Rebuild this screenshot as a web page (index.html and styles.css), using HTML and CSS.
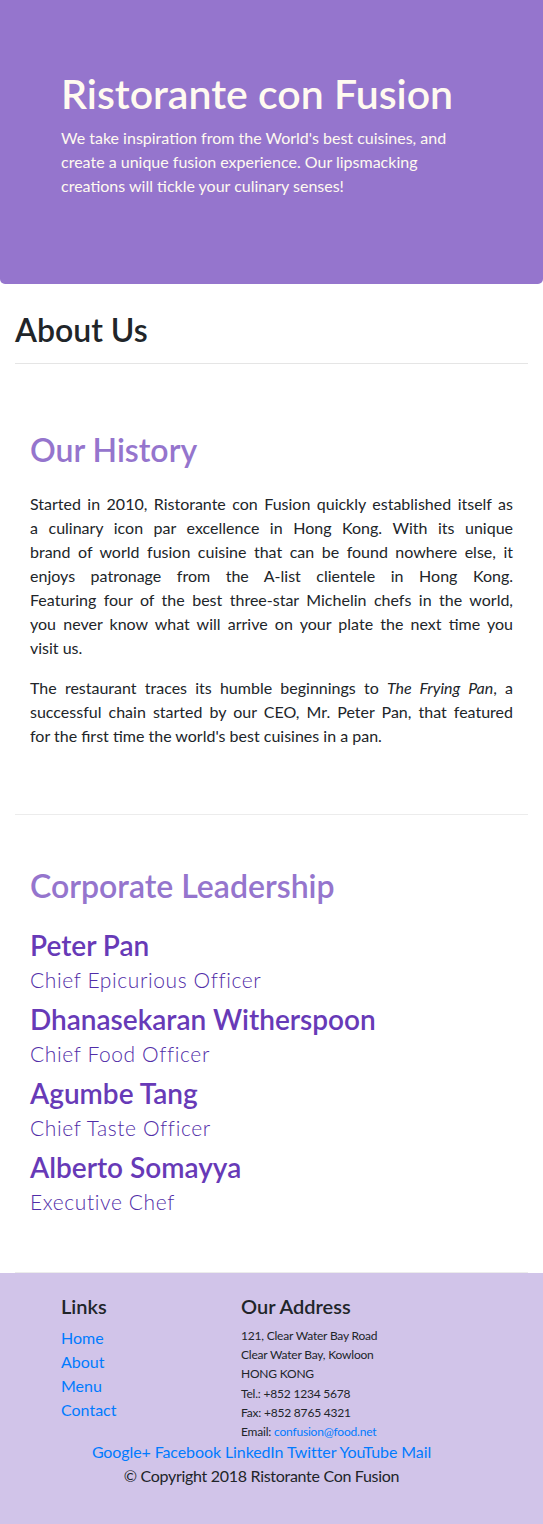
FILE: index.html
```html
<!DOCTYPE html>
<html lang="en">
<head>
<meta charset="utf-8">
<title>Ristorante con Fusion - About Us</title>
<link rel="stylesheet" href="styles.css">
</head>
<body>
<header class="jumbotron">
  <div class="jumbo-inner">
    <h1 class="brand">Ristorante con Fusion</h1>
    <p class="tagline">We take inspiration from the World's best cuisines, and create a unique fusion experience. Our lipsmacking creations will tickle your culinary senses!</p>
  </div>
</header>

<main class="container">
  <h2 class="page-title">About Us</h2>
  <hr class="rule rule-top">

  <section class="history">
    <h2 class="section-title">Our History</h2>
    <p class="body-text"><span class="ln">Started in 2010, Ristorante con Fusion quickly established itself as</span> <span class="ln">a culinary icon par excellence in Hong Kong. With its unique</span> <span class="ln">brand of world fusion cuisine that can be found nowhere else, it</span> <span class="ln">enjoys patronage from the A-list clientele in Hong Kong.</span> <span class="ln">Featuring four of the best three-star Michelin chefs in the world,</span> <span class="ln">you never know what will arrive on your plate the next time you</span> visit us.</p>
    <p class="body-text"><span class="ln">The restaurant traces its humble beginnings to <em>The Frying Pan</em>, a</span> <span class="ln">successful chain started by our CEO, Mr. Peter Pan, that featured</span> for the first time the world's best cuisines in a pan.</p>
  </section>

  <hr class="rule rule-mid">

  <section class="leadership">
    <h2 class="section-title leader-title">Corporate Leadership</h2>
    <ul class="leaders">
      <li class="leader"><h3 class="leader-name">Peter Pan</h3><p class="leader-role">Chief Epicurious Officer</p></li>
      <li class="leader"><h3 class="leader-name">Dhanasekaran Witherspoon</h3><p class="leader-role">Chief Food Officer</p></li>
      <li class="leader"><h3 class="leader-name">Agumbe Tang</h3><p class="leader-role">Chief Taste Officer</p></li>
      <li class="leader"><h3 class="leader-name">Alberto Somayya</h3><p class="leader-role">Executive Chef</p></li>
    </ul>
  </section>

  <hr class="rule rule-bottom">
</main>

<footer class="footer">
  <div class="footer-row">
    <div class="footer-links">
      <h5 class="footer-head">Links</h5>
      <ul class="link-list">
        <li><a href="#">Home</a></li>
        <li><a href="#">About</a></li>
        <li><a href="#">Menu</a></li>
        <li><a href="#">Contact</a></li>
      </ul>
    </div>
    <div class="footer-address">
      <h5 class="footer-head">Our Address</h5>
      <address>
        121, Clear Water Bay Road<br>
        Clear Water Bay, Kowloon<br>
        HONG KONG<br>
        Tel.: +852 1234 5678<br>
        Fax: +852 8765 4321<br>
        Email: <a href="#">confusion@food.net</a>
      </address>
    </div>
  </div>
  <div class="social">
    <a href="#">Google+</a> <a href="#">Facebook</a> <a href="#">LinkedIn</a> <a href="#">Twitter</a> <a href="#">YouTube</a> <a href="#">Mail</a>
  </div>
  <p class="copyright">© Copyright 2018 Ristorante Con Fusion</p>
</footer>
</body>
</html>
```
FILE: styles.css
```css
* { box-sizing: border-box; }

body {
  margin: 0;
  font-family: Lato, "Liberation Sans", sans-serif;
  font-size: 16px;
  line-height: 1.5;
  color: #212529;
  background: #fff;
}

h1, h2, h3, h5, p, ul, address { margin: 0; }

a { color: #007bff; text-decoration: none; }

/* Jumbotron */
.jumbotron {
  background: #9575CD;
  color: floralwhite;
  padding: 70px 61px;
  border-radius: 0 0 5px 5px;
}
.jumbo-inner { width: 399px; }
.brand {
  font-size: 41px;
  font-weight: 600;
  line-height: 48px;
  margin-bottom: 8px;
}
.tagline {
  font-size: 16px;
  line-height: 24px;
  margin-bottom: 16px;
}

/* Main content */
.container { padding: 0 15px; }

.page-title {
  font-size: 32px;
  font-weight: 600;
  line-height: 38px;
  margin-top: 27px;
}

.rule {
  border: 0;
  border-top: 1px solid #e5e5e5;
  margin: 0;
}
.rule-top { margin-top: 14px; }
.rule-mid { margin-top: 66px; border-top-color: #ececec; }
.rule-bottom { margin-top: 55px; border-top-color: #ececec; }

.history, .leadership { padding: 0 15px; }

.section-title {
  color: #9575CD;
  font-size: 32px;
  font-weight: 600;
  line-height: 38px;
}
.history .section-title { margin-top: 67px; margin-bottom: 23px; }
.leader-title { margin-top: 52px; margin-bottom: 23px; }

.body-text {
  text-align: justify;
  margin-bottom: 16px;
}
.body-text .ln {
  display: block;
  text-align: justify;
  text-align-last: justify;
}
.body-text:last-child { margin-bottom: 0; }

.leaders {
  list-style: none;
  padding: 0;
  display: flex;
  flex-direction: column;
  gap: 7px;
}
.leader-name {
  color: #673AB7;
  font-size: 28px;
  font-weight: 600;
  line-height: 34px;
  margin-bottom: 3px;
}
.leader-role {
  color: #512DA8;
  font-size: 21px;
  font-weight: 300;
  letter-spacing: 0.6px;
  line-height: 30px;
}

/* Footer */
.footer {
  background: #D1C4E9;
  padding: 21px 0 20px;
}
.footer-row {
  display: grid;
  grid-template-columns: 180px 1fr;
  padding-left: 61px;
}
.footer-head {
  font-size: 20px;
  font-weight: 600;
  line-height: 24px;
  margin-bottom: 8px;
}
.link-list {
  list-style: none;
  padding: 0;
  margin-bottom: 16px;
}
.link-list li { line-height: 24px; }
address {
  font-style: normal;
  font-size: 12px;
  letter-spacing: -0.2px;
  line-height: 19.2px;
}
.social {
  text-align: center;
  padding-right: 20px;
  line-height: 24px;
  letter-spacing: -0.1px;
  margin-top: -1px;
}
.copyright {
  text-align: center;
  padding-right: 20px;
  line-height: 24px;
  letter-spacing: -0.3px;
  margin-bottom: 16px;
}
```
